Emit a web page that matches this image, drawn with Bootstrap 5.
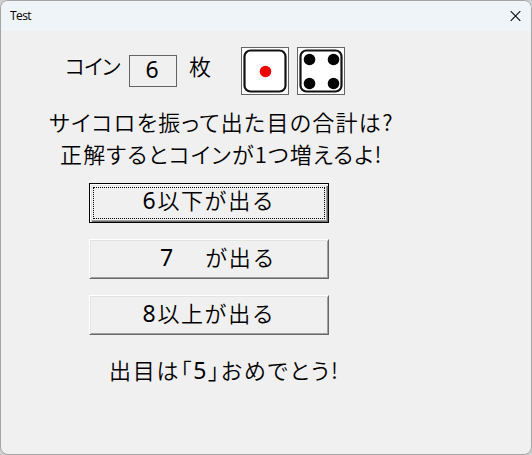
<!DOCTYPE html>
<html lang="ja">
<head>
    <meta charset="UTF-8">
    <meta name="viewport" content="width=device-width, initial-scale=1.0">
    <title>Test</title>
    <link href="https://cdn.jsdelivr.net/npm/bootstrap@5.3.3/dist/css/bootstrap.min.css" rel="stylesheet">
    <script src="https://cdn.jsdelivr.net/npm/bootstrap@5.3.3/dist/js/bootstrap.bundle.min.js"></script>
    <style>
        body {
            background: #cfcfd0;
            color: #000;
            font-family: "Noto Sans CJK JP", sans-serif;
        }
        .window {
            width: 532px;
            height: 455px;
            border: 1px solid #a5a5a6;
            border-radius: 8px;
            background: #f0f0f0;
        }
        .title-bar {
            height: 30px;
            padding: 0 10px 0 9px;
            background: #eff4f9;
            font: 12px/30px "Open Sans", "Noto Sans", sans-serif;
        }
        .title-text {
            letter-spacing: -0.6px;
        }
        .close-btn {
            width: 11px;
            height: 11px;
        }
        .game {
            font-size: 22px;
            line-height: 32px;
            font-weight: 350;
            font-feature-settings: "palt";
            white-space: nowrap;
        }
        .coin-row {
            height: 48px;
            margin-top: 16px;
            padding-left: 64px;
        }
        .coin-label {
            width: 64px;
            padding-top: 2px;
            font-size: 21px;
            letter-spacing: -0.7px;
        }
        .coin-count {
            width: 48px;
            height: 32px;
            margin-top: 8px;
            padding-right: 2px;
            border: 1px solid #646464;
            line-height: 24px;
            text-align: center;
        }
        .coin-unit {
            width: 52px;
            margin-left: 12px;
            padding-top: 2px;
        }
        .die {
            width: 48px;
            height: 48px;
            margin-right: 8px;
        }
        .num {
            font-family: "Noto Sans", sans-serif;
            font-size: 23px;
            font-weight: 400;
        }
        .question {
            margin-top: 10px;
        }
        .q-one {
            padding-left: 48px;
            letter-spacing: 1.3px;
        }
        .q-two {
            padding-left: 59px;
            letter-spacing: 1.15px;
        }
        .choices {
            gap: 16px;
            margin: 14px 0 0 88px;
        }
        .choice {
            width: 240px;
            height: 40px;
            padding: 0 0 6px;
            border: 1px solid;
            border-color: #fff #696969 #696969 #fff;
            box-shadow: inset 1px 1px #e3e3e3, inset -1px -1px #a0a0a0;
            background: #f0f0f0;
            color: #000;
            font-size: 22px;
            font-weight: 350;
            line-height: 28px;
            letter-spacing: 1.6px;
            text-align: center;
        }
        .choice.is-default {
            padding: 3px;
            border-color: #000;
            box-shadow: inset 1px 1px #fff, inset 2px 2px #e3e3e3, inset -1px -1px #696969, inset -2px -2px #a0a0a0;
        }
        .focus-dots {
            height: 32px;
            border: 1px dotted #000;
            line-height: 22px;
        }
        .seven {
            padding-left: 18px;
            margin-right: 7px;
        }
        .result {
            margin-top: 18px;
            padding-left: 108px;
            letter-spacing: 1.8px;
        }
    </style>
</head>
<body class="overflow-hidden">

<div class="window overflow-hidden">
    <div class="title-bar d-flex justify-content-between align-items-center">
        <span class="title-text">Test</span>
        <svg class="close-btn" viewBox="0 0 11 11"><path d="M.7 .2L10.3 9.8M10.3 .2L.7 9.8" stroke="#111" stroke-width="1.2" fill="none"/></svg>
    </div>

    <div class="game">
        <div class="coin-row d-flex">
            <div class="coin-label"><span>コイン</span></div>
            <div class="coin-count"><span class="num" id="coins">6</span></div>
            <div class="coin-unit"><span>枚</span></div>
            <svg class="die" viewBox="0 0 48 48">
                <rect x=".5" y=".5" width="47" height="47" fill="#fff" stroke="#646464"/>
                <rect x="3.5" y="3.5" width="41" height="41" rx="6" fill="#fff" stroke="#111" stroke-width="2.2"/>
                <circle cx="24.5" cy="24.5" r="5.8" fill="#f00000"/>
            </svg>
            <svg class="die" viewBox="0 0 48 48">
                <rect x=".5" y=".5" width="47" height="47" fill="#fff" stroke="#646464"/>
                <rect x="3.5" y="3.5" width="41" height="41" rx="6" fill="#fff" stroke="#111" stroke-width="2.2"/>
                <circle cx="12.5" cy="12.5" r="5.8"/>
                <circle cx="36.5" cy="12.5" r="5.8"/>
                <circle cx="12.5" cy="36.5" r="5.8"/>
                <circle cx="36.5" cy="36.5" r="5.8"/>
            </svg>
        </div>

        <div class="question">
            <div class="q-one"><span>サイコロを振って出た目の合計は?</span></div>
            <div class="q-two"><span>正解するとコインが1つ増えるよ!</span></div>
        </div>

        <div class="choices d-flex flex-column">
            <button type="button" class="choice is-default rounded-0"><div class="focus-dots"><span class="num">6</span>以下が出る</div></button>
            <button type="button" class="choice rounded-0"><span class="num seven">7</span>　が出る</button>
            <button type="button" class="choice rounded-0"><span class="num">8</span>以上が出る</button>
        </div>

        <div class="result"><span>出目は「<span class="num">5</span>」おめでとう!</span></div>
    </div>
</div>

</body>
</html>
